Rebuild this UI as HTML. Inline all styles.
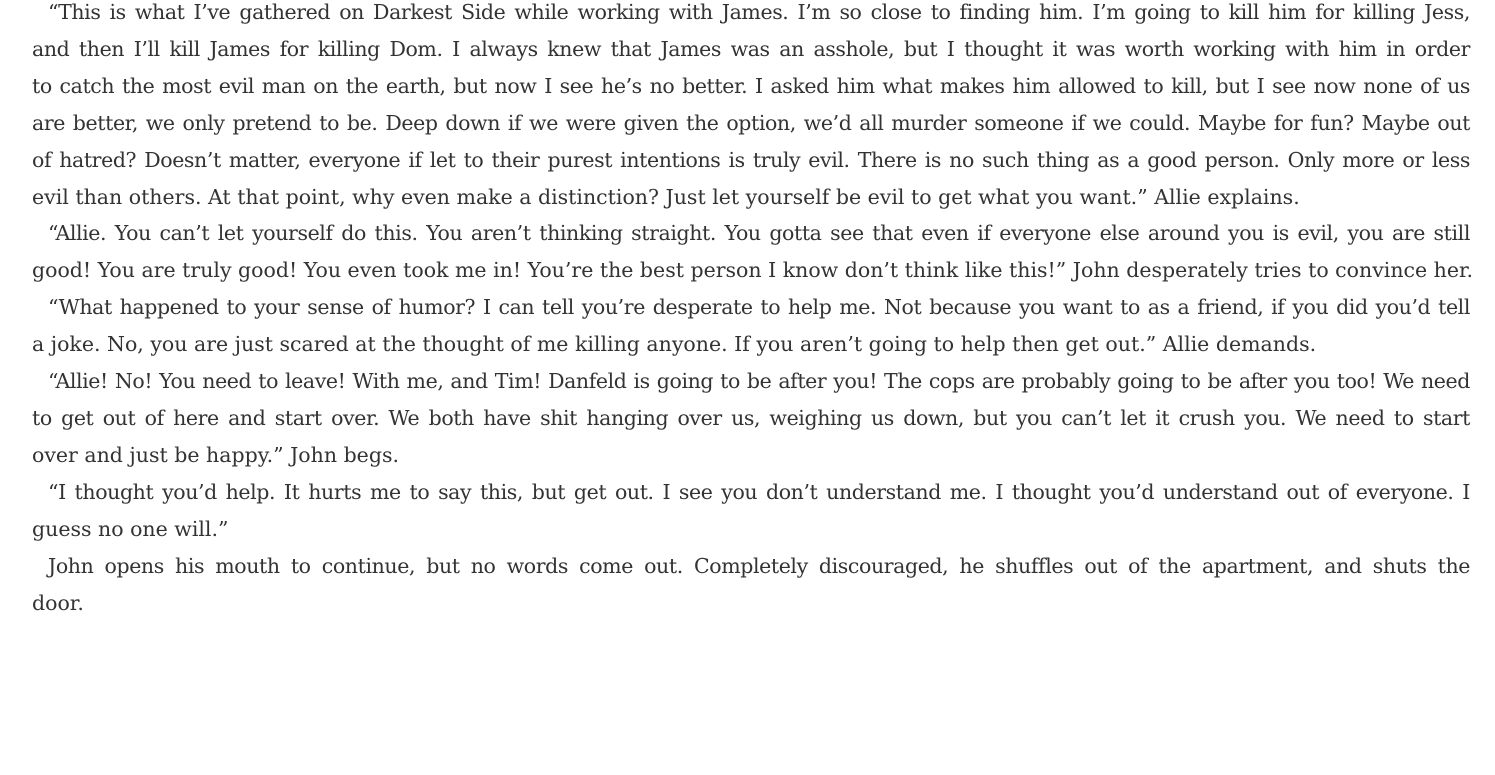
<!DOCTYPE html>
<html><head><meta charset="utf-8"><style>
html,body{margin:0;padding:0;background:#fff;width:1495px;height:775px;overflow:hidden}
.w{position:absolute;left:32px;top:-6px;width:1438px;font-family:"DejaVu Serif",serif;font-size:20.5px;line-height:36.9px;color:#333}
.l{display:block;text-align:justify;text-align-last:justify;white-space:nowrap;letter-spacing:-0.4px}
.l.e{text-align-last:left;letter-spacing:0}
.i{padding-left:16px}
</style></head><body><div class="w">
<span class="l i">“This is what I’ve gathered on Darkest Side while working with James. I’m so close to finding him. I’m going to kill him for killing Jess,</span>
<span class="l">and then I’ll kill James for killing Dom. I always knew that James was an asshole, but I thought it was worth working with him in order</span>
<span class="l">to catch the most evil man on the earth, but now I see he’s no better. I asked him what makes him allowed to kill, but I see now none of us</span>
<span class="l">are better, we only pretend to be. Deep down if we were given the option, we’d all murder someone if we could. Maybe for fun? Maybe out</span>
<span class="l">of hatred? Doesn’t matter, everyone if let to their purest intentions is truly evil. There is no such thing as a good person. Only more or less</span>
<span class="l e">evil than others. At that point, why even make a distinction? Just let yourself be evil to get what you want.” Allie explains.</span>
<span class="l i">“Allie. You can’t let yourself do this. You aren’t thinking straight. You gotta see that even if everyone else around you is evil, you are still</span>
<span class="l e">good! You are truly good! You even took me in! You’re the best person I know don’t think like this!” John desperately tries to convince her.</span>
<span class="l i">“What happened to your sense of humor? I can tell you’re desperate to help me. Not because you want to as a friend, if you did you’d tell</span>
<span class="l e">a joke. No, you are just scared at the thought of me killing anyone. If you aren’t going to help then get out.” Allie demands.</span>
<span class="l i">“Allie! No! You need to leave! With me, and Tim! Danfeld is going to be after you! The cops are probably going to be after you too! We need</span>
<span class="l">to get out of here and start over. We both have shit hanging over us, weighing us down, but you can’t let it crush you. We need to start</span>
<span class="l e">over and just be happy.” John begs.</span>
<span class="l i">“I thought you’d help. It hurts me to say this, but get out. I see you don’t understand me. I thought you’d understand out of everyone. I</span>
<span class="l e">guess no one will.”</span>
<span class="l i">John opens his mouth to continue, but no words come out. Completely discouraged, he shuffles out of the apartment, and shuts the</span>
<span class="l e">door.</span>
</div></body></html>
